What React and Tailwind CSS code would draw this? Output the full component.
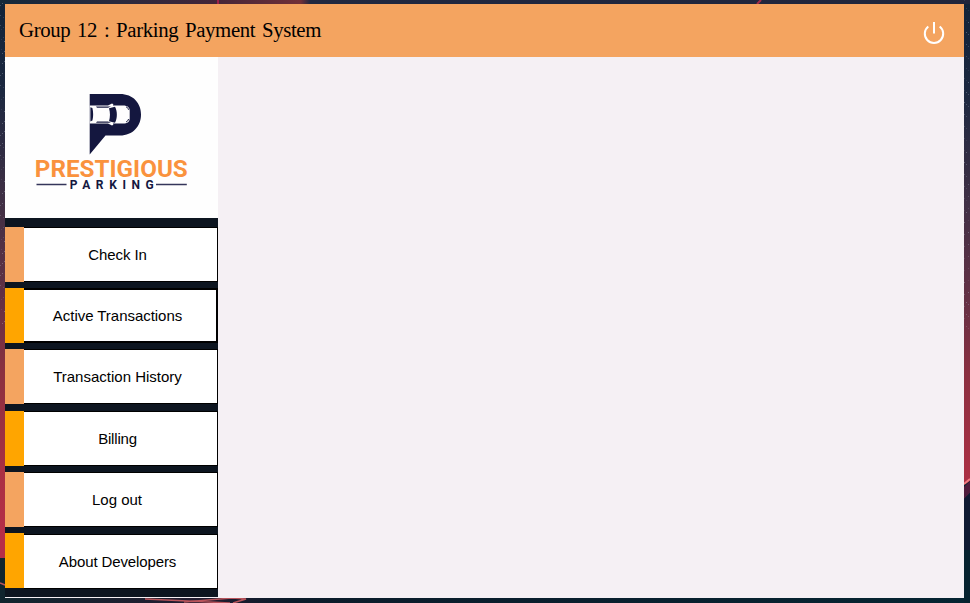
const items = [
  { label: 'Check In', strip: 'bg-[#f4a460]', gap: '', box: 'border-y border-r', text: '-tracking-[0.1px] pr-[6px]' },
  { label: 'Active Transactions', strip: 'bg-[#ffa500]', gap: 'mt-1.5', box: 'border-y-2 border-r-2', text: '-tracking-[0.04px] pr-[5px]' },
  { label: 'Transaction History', strip: 'bg-[#f4a460]', gap: 'mt-1.5', box: 'border-y border-r', text: 'pr-[6px]' },
  { label: 'Billing', strip: 'bg-[#ffa500]', gap: 'mt-[7px]', box: 'border-y border-r', text: '-tracking-[0.2px] pr-[6px]' },
  { label: 'Log out', strip: 'bg-[#f4a460]', gap: 'mt-1.5', box: 'border-y border-r', text: 'pr-[7px]' },
  { label: 'About Developers', strip: 'bg-[#ffa500]', gap: 'mt-1.5', box: 'border-y border-r translate-y-px', text: '-tracking-[0.12px] pr-[6px]' },
];

// Fixed star field for the desktop wallpaper
const stars = Array.from({ length: 130 }, (_, i) => ({
  x: i % 2 ? (i * 7) % 5 : 964 + ((i * 11) % 6),
  y: (i * 53) % 330,
  o: 0.1 + ((i * 17) % 10) / 30,
}));

function Wallpaper() {
  return (
    <svg className="absolute inset-0 h-full w-full" viewBox="0 0 970 603" aria-hidden="true">
      <defs>
        <linearGradient id="sky" x1="0" y1="0" x2="0" y2="1">
          <stop offset="0" stopColor="#112338" />
          <stop offset="0.15" stopColor="#1c2840" />
          <stop offset="0.35" stopColor="#433045" />
          <stop offset="0.5" stopColor="#653044" />
          <stop offset="0.62" stopColor="#8b3040" />
          <stop offset="0.78" stopColor="#a93043" />
          <stop offset="0.9" stopColor="#b72d48" />
        </linearGradient>
        <linearGradient id="top" x1="0" y1="0" x2="1" y2="0">
          <stop offset="0" stopColor="#14283a" />
          <stop offset="0.12" stopColor="#292a3e" />
          <stop offset="0.22" stopColor="#432538" />
          <stop offset="0.31" stopColor="#713038" />
          <stop offset="0.32" stopColor="#202840" />
          <stop offset="1" stopColor="#20253b" />
        </linearGradient>
        <linearGradient id="ground" x1="0" y1="0" x2="1" y2="0">
          <stop offset="0" stopColor="#10252e" />
          <stop offset="0.2" stopColor="#221c30" />
          <stop offset="0.3" stopColor="#0b1b2a" />
          <stop offset="1" stopColor="#052431" />
        </linearGradient>
      </defs>
      <rect width="970" height="603" fill="url(#sky)" />
      <rect width="970" height="4" fill="url(#top)" />
      <path d="M217 0h2v4h-2z" fill="#9c214a" />
      <path d="M757 4l4-4" stroke="#a52d48" strokeWidth="2" />
      {stars.map((s, i) => (
        <rect key={i} x={s.x} y={s.y} width="1" height="1" fill="#b6c0d0" opacity={s.o} />
      ))}
      <path d="M0 558h5v40h959V485l6-4v122H0z" fill="url(#ground)" />
      <path d="M964 487l6-6v12l-6 6z" fill="#4f1c3c" />
      <path d="M964 499v99h6V493z" fill="#101a32" />
      <path d="M964 550v53h6v-53z" fill="#06222e" />
      <path d="M964 484l6-5" stroke="#f07c81" strokeWidth="2" />
      <path d="M0 583l5 2M145 599l85 4M184 602l48-4 14 1-13 4" stroke="#b9545b" strokeWidth="1.5" fill="none" />
    </svg>
  );
}

function Logo() {
  return (
    <svg className="h-[161px] w-[213px] shrink-0 bg-[#fefefe]" viewBox="5 57 213 161" role="img" aria-label="Prestigious Parking">
      <path d="M89.7 94H120C133 94 141 103 141 114.5S133 135.5 120 135.5H105.5L89.7 154.5Z" fill="#14173f" />
      <path d="M89.7 105.5H108L112 103.6l1.4.7-.5 1.2H123c4.7 0 6.700 2.300 6.700 5v8c0 3-2 5-6.700 5h-10.100l.5 1.200-1.400.8-4-2H89.7Z" fill="#fefefe" />
      <path d="M90.400 107.300l2 .8c1 4 1 8.500 0 12.500l-2 .8Z" fill="#14173f" />
      <path d="M109 108.200l6-1.500c2.500 4.500 2.500 11.500 0 16l-6-1.500c1.300-4 1.300-9 0-13Z" fill="#14173f" />
      <path d="M96 106.500h15l-3 1.300H97Zm0 16.200h15l-3-1.300H97Z" fill="#14173f" />
      <path d="M126 107c1.200.1 2.300 1.200 2.500 2.800m-2.500 12c1.200-.1 2.300-1.200 2.500-2.800" stroke="#14173f" fill="none" />
      <text x="34.800" y="177.300" textLength="153" lengthAdjust="spacingAndGlyphs" className="fill-[#fa923d] font-[Roboto,sans-serif] text-[24.4px] font-bold">PRESTIGIOUS</text>
      <path d="M36.500 184.500H66.500M156 184.500h30.800" stroke="#34355a" strokeWidth="1.300" />
      <text x="69.800" y="188.500" textLength="84" lengthAdjust="spacing" className="fill-[#14173f] font-[Roboto,sans-serif] text-[12px] font-bold">PARKING</text>
    </svg>
  );
}

export default function App() {
  return (
    <div className="relative h-[603px] w-[970px] overflow-hidden">
      <Wallpaper />
      <main className="relative ml-[5px] flex w-[959px] translate-y-1 flex-col bg-[#f5f0f4]">
        <header className="flex h-[53px] items-center justify-between bg-[#f4a460] pr-[19px] pl-3.5">
          <h1 className="w-[301px] pb-0.5 font-['Liberation_Serif',serif] text-[20.8px] leading-6 tracking-[-0.36px] whitespace-nowrap text-black [word-spacing:1.9px]">
            Group 12 : Parking Payment System
          </h1>
          <button aria-label="Power" className="mt-1 h-6 w-[22px]">
            <svg className="h-6 w-[22px]" viewBox="0 0 22 24" fill="none" stroke="#fff" strokeWidth="2">
              <path d="M11 1v11.500M5.300 5.500a9.200 9.200 0 1 0 11.400 0" />
            </svg>
          </button>
        </header>
        <div className="flex h-[541px]">
          <aside className="flex h-[540px] w-[213px] flex-col bg-[#0d1520]">
            <Logo />
            <nav className="flex flex-col pt-[9px] font-['Liberation_Sans',sans-serif] text-[15px] text-black">
              {items.map((item) => (
                <div key={item.label} className={`flex h-[55px] ${item.gap}`}>
                  <span className={`w-[19px] ${item.strip}`} />
                  <button className={`flex-1 border-black bg-white pt-0.5 ${item.text} ${item.box}`}>{item.label}</button>
                </div>
              ))}
            </nav>
          </aside>
        </div>
      </main>
    </div>
  );
}
